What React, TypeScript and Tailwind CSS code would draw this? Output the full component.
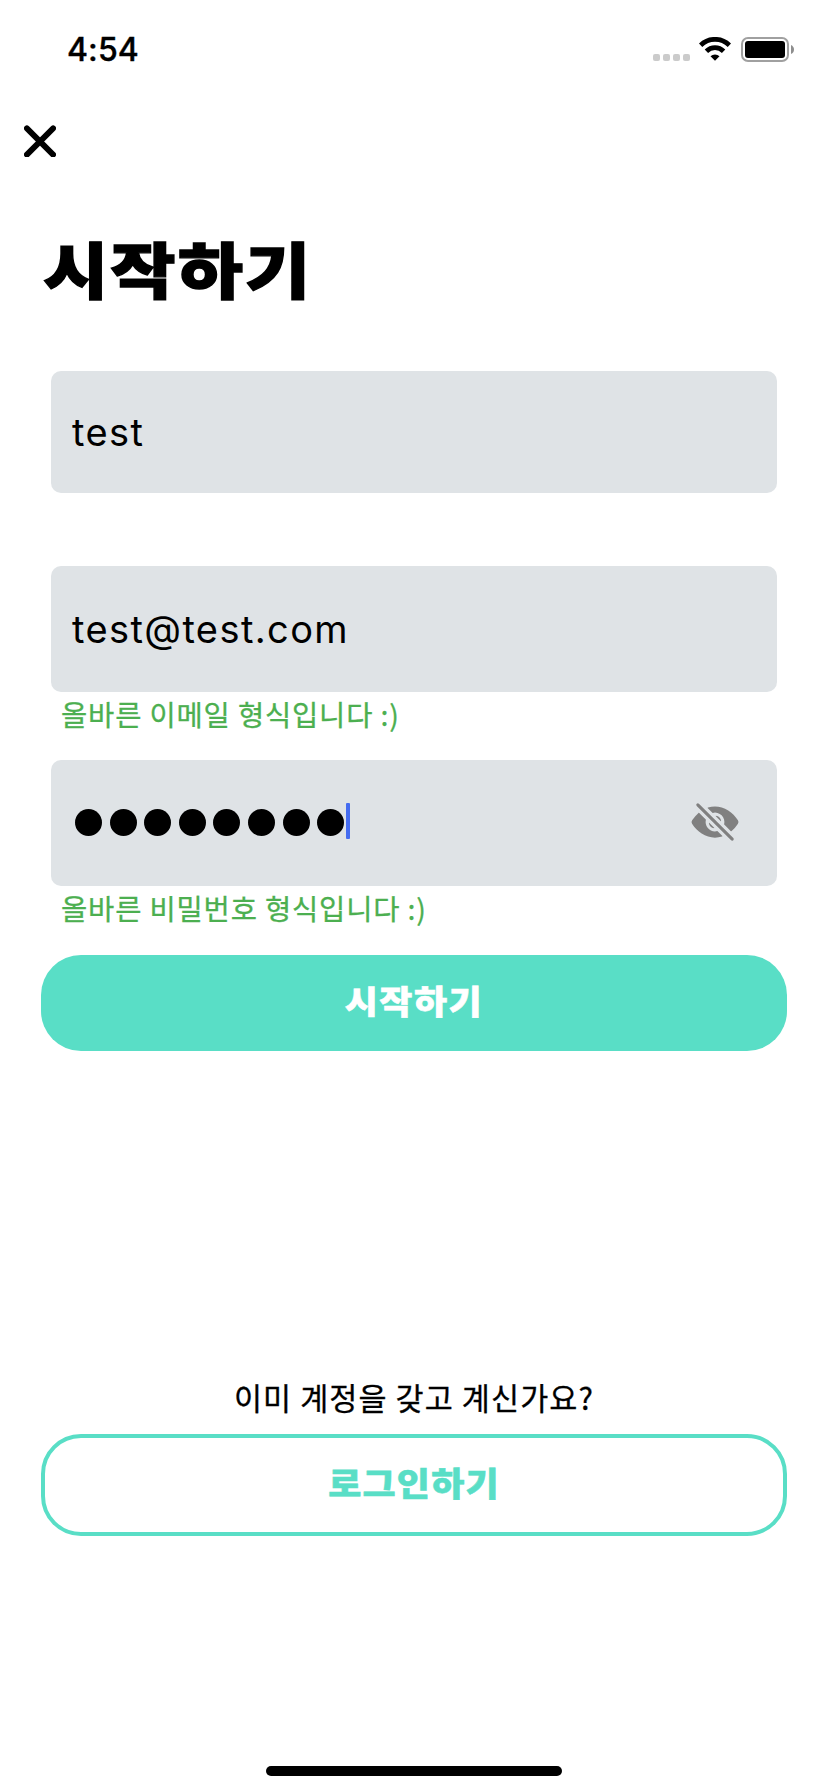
import type { ReactNode } from 'react';
import { IoEyeOff } from 'react-icons/io5';

const PASSWORD_LENGTH = 8;

function StatusBar() {
  return (
    <header className="flex h-[100px] items-start justify-between pl-[67px] pr-[34px]">
      <span className="mt-[30px] font-['Inter'] text-[32px] leading-[39px] font-medium tracking-[0.1px] [-webkit-text-stroke:0.4px_#000]">4:54</span>
      <div className="mt-[37px] flex h-[25px]">
        <div className="flex items-end gap-[3px] pb-px">
          {[0, 1, 2, 3].map((bar) => (
            <span key={bar} className="size-[7px] rounded-[2px] bg-[#cbcbcb]" />
          ))}
        </div>
        <svg className="ml-[9px] h-[24px] w-[32px]" viewBox="0 0 32 24">
          <path d="M1.6 8.2a20.6 20.6 0 0 1 28.8 0" fill="none" stroke="#000" strokeWidth="4.8" />
          <path d="M7.4 14.2a12.2 12.2 0 0 1 17.2 0" fill="none" stroke="#000" strokeWidth="4.8" />
          <path d="M11.5 19.3a6.5 6.5 0 0 1 9 0L16 23.8z" />
        </svg>
        <div className="ml-[10px] h-[25px] w-[48px] rounded-[7px] border-2 border-[#a0a0a0] p-[2px]">
          <div className="h-full w-full rounded-[3px] bg-black" />
        </div>
        <svg className="mt-[8px] ml-[2px] h-[9px] w-[3px]" viewBox="0 0 3 9">
          <path d="M0 0Q3 1.5 3 4.5T0 9z" fill="#8e8e8e" />
        </svg>
      </div>
    </header>
  );
}

function Field({ className, children }: { className: string; children: ReactNode }) {
  return (
    <div className={`mx-[10px] flex items-center rounded-[10px] bg-[#dfe3e6] pl-5 pr-[36px] ${className}`}>
      {children}
    </div>
  );
}

function Hint({ children }: { children: ReactNode }) {
  return (
    <p className="ml-[20px] h-[68px] pt-px text-[28.5px] leading-[42px] tracking-[0.85px] whitespace-nowrap text-[#4caf50] [-webkit-text-stroke:0.3px_#4caf50]">
      {children}
    </p>
  );
}

export default function App() {
  return (
    <div className="flex h-[1792px] w-[828px] flex-col bg-white font-['Noto_Sans_CJK_KR',sans-serif] text-black">
      <StatusBar />
      <button aria-label="닫기" className="mt-[25px] ml-6 size-8">
        <svg className="size-8" viewBox="0 0 32 32" fill="none" stroke="currentColor" strokeWidth="5.8" strokeLinecap="round">
          <path d="M2.9 3.4l26.2 26.2M29.1 3.4L2.9 29.6" />
        </svg>
      </button>
      <main className="flex flex-col px-[41px]">
        <h1 className="mt-[64px] mb-[50px] ml-[2px] h-[100px] origin-[0_20%] scale-y-[0.87] text-[71px] leading-[100px] font-black tracking-[2px] [-webkit-text-stroke:1.5px_#000]">
          시작하기
        </h1>
        <Field className="h-[122px]">
          <span className="ml-px font-['Inter'] text-[38px] leading-[46px] tracking-[1.4px]">test</span>
        </Field>
        <Field className="mt-[73px] h-[126px]">
          <span className="ml-px font-['Inter'] text-[38px] leading-[46px] tracking-[1.4px]">test@test.com</span>
        </Field>
        <Hint>올바른 이메일 형식입니다 :)</Hint>
        <Field className="h-[126px] pb-[2px]">
          <div className="ml-[4px] flex gap-[7.6px]">
            {Array.from({ length: PASSWORD_LENGTH }, (_, i) => (
              <span key={i} className="size-[27px] rounded-full bg-black" />
            ))}
          </div>
          <span className="mb-[2px] ml-[2px] h-[36px] w-[4px] rounded-[1px] bg-[#446cf0]" />
          <IoEyeOff className="mr-px ml-auto size-[50px] text-[#808080]" />
        </Field>
        <Hint>올바른 비밀번호 형식입니다 :)</Hint>
        <button className="mt-px h-[96px] rounded-[40px] bg-[#59dec6] text-[36px] leading-[92px] font-black tracking-[1.5px] text-white">
          <span className="-mt-1.5 block scale-y-[0.9] [-webkit-text-stroke:0.6px_#fff]">시작하기</span>
        </button>
        <p className="mt-[321px] h-[62px] text-center text-[30.5px] leading-[50px] tracking-[1.1px] [-webkit-text-stroke:0.3px_#000]">
          이미 계정을 갖고 계신가요?
        </p>
        <button className="h-[102px] rounded-[40px] border-4 border-[#59dec6] text-[36px] leading-[90px] font-black tracking-[1.2px] text-[#59dec6]">
          <span className="-mt-1.5 block scale-y-[0.9] [-webkit-text-stroke:0.6px_#59dec6]">로그인하기</span>
        </button>
      </main>
      <div className="mt-auto mb-4 h-[10px] w-[296px] self-center rounded-full bg-black" />
    </div>
  );
}
